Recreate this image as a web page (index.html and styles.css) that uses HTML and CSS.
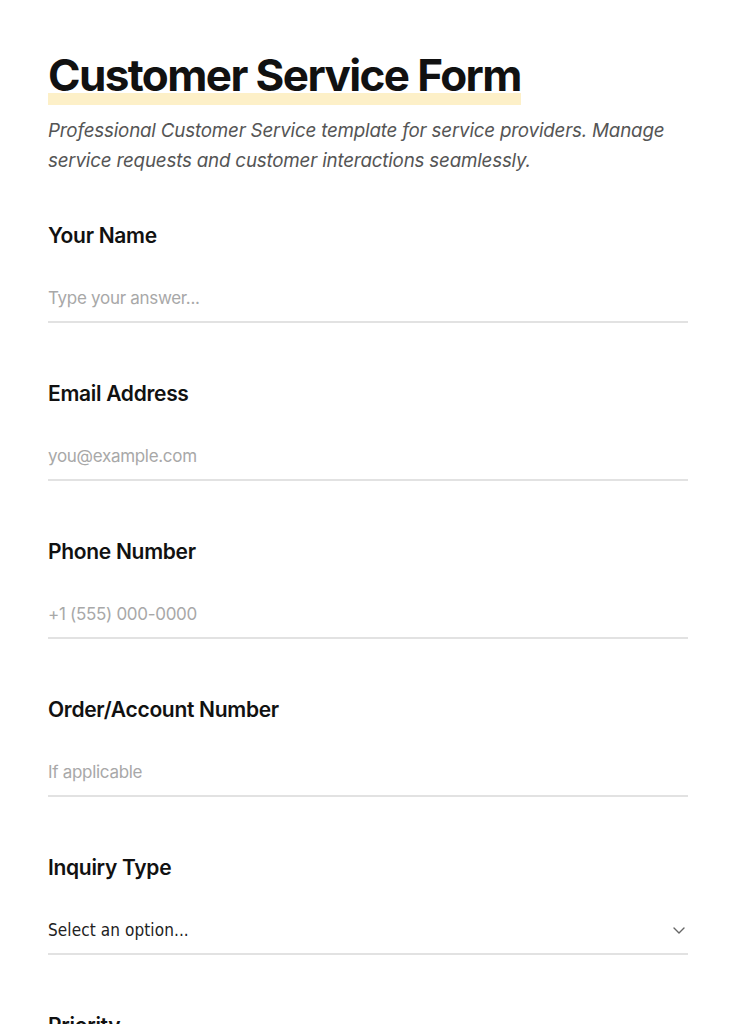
FILE: index.html
```html
<!DOCTYPE html>
<html lang="en">
<head>
<meta charset="utf-8">
<title>Customer Service Form</title>
<link rel="stylesheet" href="styles.css">
</head>
<body>
<main class="page">
  <header class="head">
    <h1 class="title"><span class="mark">Customer Service Form</span></h1>
    <p class="subtitle">Professional Customer Service template for service providers. Manage service requests and customer interactions seamlessly.</p>
  </header>
  <form class="form">
    <div class="field">
      <label class="label">Your Name</label>
      <div class="input"><span class="ph">Type your answer...</span></div>
    </div>
    <div class="field">
      <label class="label">Email Address</label>
      <div class="input"><span class="ph">you@example.com</span></div>
    </div>
    <div class="field">
      <label class="label">Phone Number</label>
      <div class="input"><span class="ph">+1 (555) 000-0000</span></div>
    </div>
    <div class="field">
      <label class="label">Order/Account Number</label>
      <div class="input"><span class="ph">If applicable</span></div>
    </div>
    <div class="field">
      <label class="label">Inquiry Type</label>
      <div class="input select"><span class="val">Select an option...</span>
        <svg class="chev" width="14" height="14" viewBox="0 0 14 14"><path d="M2 5l5 5 5-5" fill="none" stroke="#666" stroke-width="1.4" stroke-linecap="round" stroke-linejoin="round"/></svg>
      </div>
    </div>
    <div class="field">
      <label class="label">Priority</label>
    </div>
  </form>
</main>
</body>
</html>
```
FILE: styles.css
```css
* { box-sizing: border-box; }
html, body { margin: 0; padding: 0; background: #fff; }
body { font-family: Inter, "Noto Sans", sans-serif; color: #111; }
.page { width: 736px; padding: 48px 48px 0; }
.head { margin-bottom: 46px; }
.title { margin: 0; font-size: 44px; font-weight: 700; letter-spacing: -1.6px; line-height: 54px; }
.mark { display: inline-block; background: linear-gradient(to bottom, transparent 45px, #fdf0c8 45px, #fdf0c8 57px, transparent 57px); height: 58px; }
.subtitle { margin: 10px 0 0; font-style: italic; font-size: 18.8px; line-height: 30px; color: #555; letter-spacing: -0.2px; }
.form { display: flex; flex-direction: column; gap: 57px; }
.field { display: flex; flex-direction: column; }
.label { font-size: 21px; font-weight: 600; letter-spacing: -0.3px; line-height: 28px; color: #111; }
.input { margin-top: 30px; height: 43px; border-bottom: 2px solid #e2e2e2; display: flex; align-items: center; padding-bottom: 6px; }
.ph { font-size: 17px; color: #a8a8a8; letter-spacing: -0.3px; }
.select { justify-content: space-between; }
.val { font-family: "DejaVu Sans Condensed", "Liberation Sans Narrow", sans-serif; font-size: 17px; color: #222; letter-spacing: 0.1px; }
.chev { margin-right: 2px; }
```
